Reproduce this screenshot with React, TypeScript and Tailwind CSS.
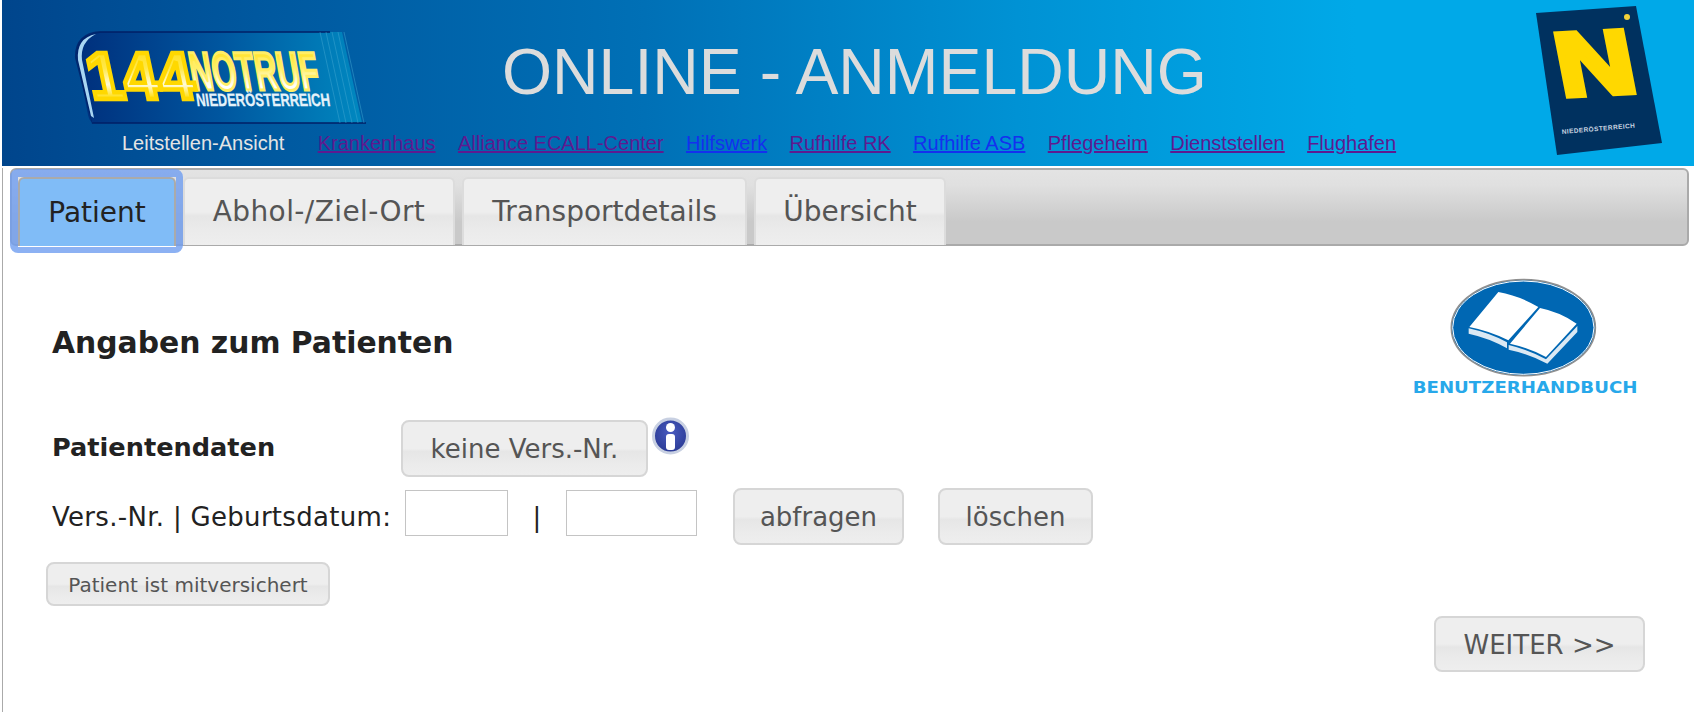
import React from "react";

const grad =
  "bg-[linear-gradient(#eeeeee_0%,#eeeeee_50%,#e6e6e6_56%,#ebebeb_78%,#eeeeee_100%)]";
const btn = `flex items-center justify-center rounded-lg border-2 border-[#d6d6d6] pt-[2px] text-[#555555] ${grad}`;
const tab = `flex h-[68px] items-center justify-center rounded-t-md border-2 border-b-0 border-[#dcdcdc] text-[28px] text-[#555555] ${grad}`;

function NotrufLogo() {
  return (
    <svg viewBox="72 25 300 105" width="300" height="105" className="shrink-0">
      <defs>
        <linearGradient id="lg-bg" x1="0" x2="1" y1="0" y2="0">
          <stop offset="0" stopColor="#002f7c" />
          <stop offset="0.5" stopColor="#00569f" />
          <stop offset="1" stopColor="#0088c0" />
        </linearGradient>
        <linearGradient id="lg-txt" x1="0" x2="0" y1="0" y2="1">
          <stop offset="0" stopColor="#ffd900" />
          <stop offset="0.4" stopColor="#ffe84a" />
          <stop offset="0.62" stopColor="#fffbd8" />
          <stop offset="0.78" stopColor="#ffe020" />
          <stop offset="1" stopColor="#ffd800" />
        </linearGradient>
        <linearGradient id="lg-txt2" x1="0" x2="0" y1="0" y2="1">
          <stop offset="0" stopColor="#ffd900" />
          <stop offset="0.45" stopColor="#fff06a" />
          <stop offset="0.75" stopColor="#ffffff" />
          <stop offset="1" stopColor="#fffbe0" />
        </linearGradient>
      </defs>
      <path d="M100 32 H342 L362 123 H94 Q90 123 88 115 L77 58 Q74 34 100 32 Z" fill="url(#lg-bg)" />
      <path d="M100 31 H330 V33 H100 Q78 35 79 58 L92 122 H366 L366 124 H92 L75 58 Q74 33 100 31Z" fill="#001f66" opacity="0.75" />
      <path d="M96 34 Q76 38 78 60 L91 116 L94 118 L82 60 Q80 42 96 34 Z" fill="#a9d6f2" />
      <g stroke="#3fa6d2" strokeWidth="1" opacity="0.5">
        <line x1="320" y1="32" x2="340" y2="123" />
        <line x1="326" y1="32" x2="346" y2="123" />
        <line x1="332" y1="32" x2="352" y2="123" />
        <line x1="338" y1="32" x2="358" y2="123" />
        <line x1="344" y1="32" x2="364" y2="123" />
      </g>
      <g transform="translate(193 90) skewX(10) scale(0.57 1)">
        <text x="0" y="0" fontFamily="'Liberation Sans', sans-serif" fontWeight="700" fontSize="54" fill="url(#lg-txt2)" stroke="#ffee66" strokeWidth="3">NOTRUF</text>
      </g>
      <g transform="translate(197 106) skewX(8) scale(0.72 1)">
        <text x="0" y="0" fontFamily="'Liberation Sans', sans-serif" fontWeight="700" fontSize="18" fill="#e4f2fa" stroke="#e4f2fa" strokeWidth="0.3">NIEDERÖSTERREICH</text>
      </g>
      <g transform="translate(92 99) skewX(12) scale(0.95 1)">
        <text x="0" y="0" fontFamily="'Liberation Sans', sans-serif" fontWeight="700" fontSize="67" fill="url(#lg-txt)" stroke="#ffd800" strokeWidth="4.5">144</text>
      </g>
    </svg>
  );
}

function NoeLogo() {
  return (
    <svg viewBox="1530 0 140 160" width="140" height="160" className="shrink-0">
      <polygon points="1536,13 1636,6 1662,143 1557,155" fill="#00315f" />
      <g transform="translate(1562 96) rotate(-3) skewX(8) scale(1.2 1)">
        <text x="0" y="0" fontFamily="'Liberation Sans', sans-serif" fontWeight="700" fontSize="90" fill="#ffd800" stroke="#ffd800" strokeWidth="6">N</text>
      </g>
      <circle cx="1627" cy="17" r="3" fill="#f2d23a" />
      <g transform="translate(1562 134) rotate(-5)">
        <text x="0" y="0" fontFamily="'Liberation Sans', sans-serif" fontWeight="700" fontSize="6.5" letterSpacing="0.4" fill="#c8d4e0">NIEDERÖSTERREICH</text>
      </g>
    </svg>
  );
}

function BookLogo() {
  return (
    <svg viewBox="90 50 690 366" width="230" height="122" className="-mb-[5px] shrink-0">
      <ellipse cx="430" cy="202" rx="216" ry="144" fill="#0067b3" stroke="#8f8f8f" strokeWidth="5" />
      <ellipse cx="430" cy="202" rx="212" ry="140" fill="#0067b3" stroke="#ffffff" strokeWidth="3" />
      <path d="M355 95 Q418 106 475 140 L385 240 Q330 212 268 200 Z" fill="#ffffff" />
      <path d="M480 143 Q540 155 590 190 L498 290 Q445 262 390 250 Z" fill="#ffffff" />
      <path d="M266 204 Q330 218 381 246 L381 264 Q330 234 266 220 Z" fill="#dbe9f4" />
      <path d="M386 254 Q445 268 498 297 L592 197 L592 215 L502 310 Q445 280 386 268 Z" fill="#dbe9f4" />
      <g transform="translate(98 397) scale(1.16 1)">
        <text x="0" y="0" fontFamily="'DejaVu Sans', sans-serif" fontWeight="700" fontSize="47" fill="#27a8ea">BENUTZERHANDBUCH</text>
      </g>
    </svg>
  );
}

function InfoIcon() {
  return (
    <svg viewBox="0 0 37 38" width="37" height="38" className="shrink-0">
      <defs>
        <radialGradient id="ig" cx="0.5" cy="0.4" r="0.6">
          <stop offset="0" stopColor="#4a5cc0" />
          <stop offset="1" stopColor="#2a3a94" />
        </radialGradient>
      </defs>
      <circle cx="18.5" cy="19" r="17" fill="url(#ig)" stroke="#c8d0e2" strokeWidth="3" />
      <circle cx="18.5" cy="10.5" r="4.5" fill="#ffffff" />
      <rect x="14" y="17" width="9" height="16" rx="3" fill="#ffffff" />
    </svg>
  );
}

const links: [string, string][] = [
  ["Krankenhaus", "text-[#5e1a90]"],
  ["Alliance ECALL-Center", "text-[#5e1a90]"],
  ["Hilfswerk", "text-[#1430ee]"],
  ["Rufhilfe RK", "text-[#5e1a90]"],
  ["Rufhilfe ASB", "text-[#1430ee]"],
  ["Pflegeheim", "text-[#5e1a90]"],
  ["Dienststellen", "text-[#5e1a90]"],
  ["Flughafen", "text-[#5e1a90]"],
];

export default function App() {
  return (
    <div className="min-h-[712px] bg-white font-['DejaVu_Sans',sans-serif] text-[#222222]">
      <header className="ml-[2px] flex h-[166px] bg-[linear-gradient(90deg,#00458c_0%,#00589f_15%,#0070b6_38%,#0092d4_60%,#00a9e8_80%,#00a9e8_100%)] font-['Liberation_Sans',sans-serif]">
        <div className="flex min-w-0 flex-1 flex-col">
          <div className="flex h-[130px] items-start">
            <div className="ml-[70px] mt-[25px]">
              <NotrufLogo />
            </div>
            <h1 className="ml-[130px] mt-[34px] text-[64.4px] font-normal leading-[76px] text-[#dcdcdc]">
              ONLINE - ANMELDUNG
            </h1>
          </div>
          <div className="flex items-center gap-[22.4px] pl-[120px] text-[20px] leading-[26px]">
            <span className="mr-[11px] text-[#e4e4e4]">Leitstellen-Ansicht</span>
            {links.map(([label, color]) => (
              <a key={label} href="#" className={`underline ${color}`}>
                {label}
              </a>
            ))}
          </div>
        </div>
        <div className="mr-[24px] shrink-0">
          <NoeLogo />
        </div>
      </header>

      <main className="ml-[2px] h-[546px] border-l-[1px] border-[#aaaaaa]">
        <div className="ml-[7px] mr-[5px] mt-[2px] flex h-[78px] gap-[7px] rounded-md border-2 border-[#aaaaaa] pl-[6px] pt-[7px] bg-[linear-gradient(#e3e3e3_0%,#e0e0e0_20%,#c9c9c9_70%,#c9c9c9_100%)]">
          <div className="-ml-[8px] -mr-[7px] -mt-[8px] h-[84px] rounded-lg border-[7px] border-l-[8px] border-t-[8px] border-b-[6px] border-[#6f9df0cc]">
            <div className="flex h-[69px] w-[158px] items-center justify-center rounded-t-md border-2 border-b-0 border-[#aaaaaa] bg-[#80bcf7] text-[28px] text-[#222222]">
              Patient
            </div>
            <div className="h-px bg-white" />
          </div>
          <div className={`${tab} w-[272px] tracking-[0.4px]`}>Abhol-/Ziel-Ort</div>
          <div className={`${tab} w-[285px]`}>Transportdetails</div>
          <div className={`${tab} w-[192px]`}>Übersicht</div>
        </div>

        <div className="mr-[54px] mt-[31px] flex items-start justify-between pl-[49px]">
          <h2 className="mt-[47px] text-[29.8px] font-bold leading-[38px] text-[#222222]">Angaben zum Patienten</h2>
          <BookLogo />
        </div>

        <div className="mt-[26px] flex items-start pl-[49px]">
          <div className="w-[349px] pt-[10px] text-[25.6px] font-bold leading-[34px]">Patientendaten</div>
          <div className={`${btn} h-[57px] w-[247px] text-[26px]`}>keine Vers.-Nr.</div>
          <div className="-mt-[3px] ml-[4px]">
            <InfoIcon />
          </div>
        </div>

        <div className="mt-[11px] flex items-start pl-[49px]">
          <div className="w-[353px] whitespace-nowrap pt-[12px] text-[26px] leading-[34px] tracking-[0.3px]">Vers.-Nr. | Geburtsdatum:</div>
          <input className="mt-[2px] h-[46px] w-[103px] border border-[#c4c4c4] bg-white" />
          <div className="w-[58px] pt-[12px] text-center text-[26px] leading-[34px]">|</div>
          <input className="mt-[2px] h-[46px] w-[131px] border border-[#c4c4c4] bg-white" />
          <div className={`${btn} ml-[36px] h-[57px] w-[171px] text-[26px]`}>abfragen</div>
          <div className={`${btn} ml-[34px] h-[57px] w-[155px] text-[26px]`}>löschen</div>
        </div>

        <div className="ml-[43px] mt-[17px]">
          <div className={`${btn} h-[44px] w-[284px] text-[20px]`}>Patient ist mitversichert</div>
        </div>

        <div className="mr-[49px] mt-[10px] flex justify-end">
          <div className={`${btn} h-[56px] w-[211px] text-[26px]`}>WEITER &gt;&gt;</div>
        </div>
      </main>
    </div>
  );
}
